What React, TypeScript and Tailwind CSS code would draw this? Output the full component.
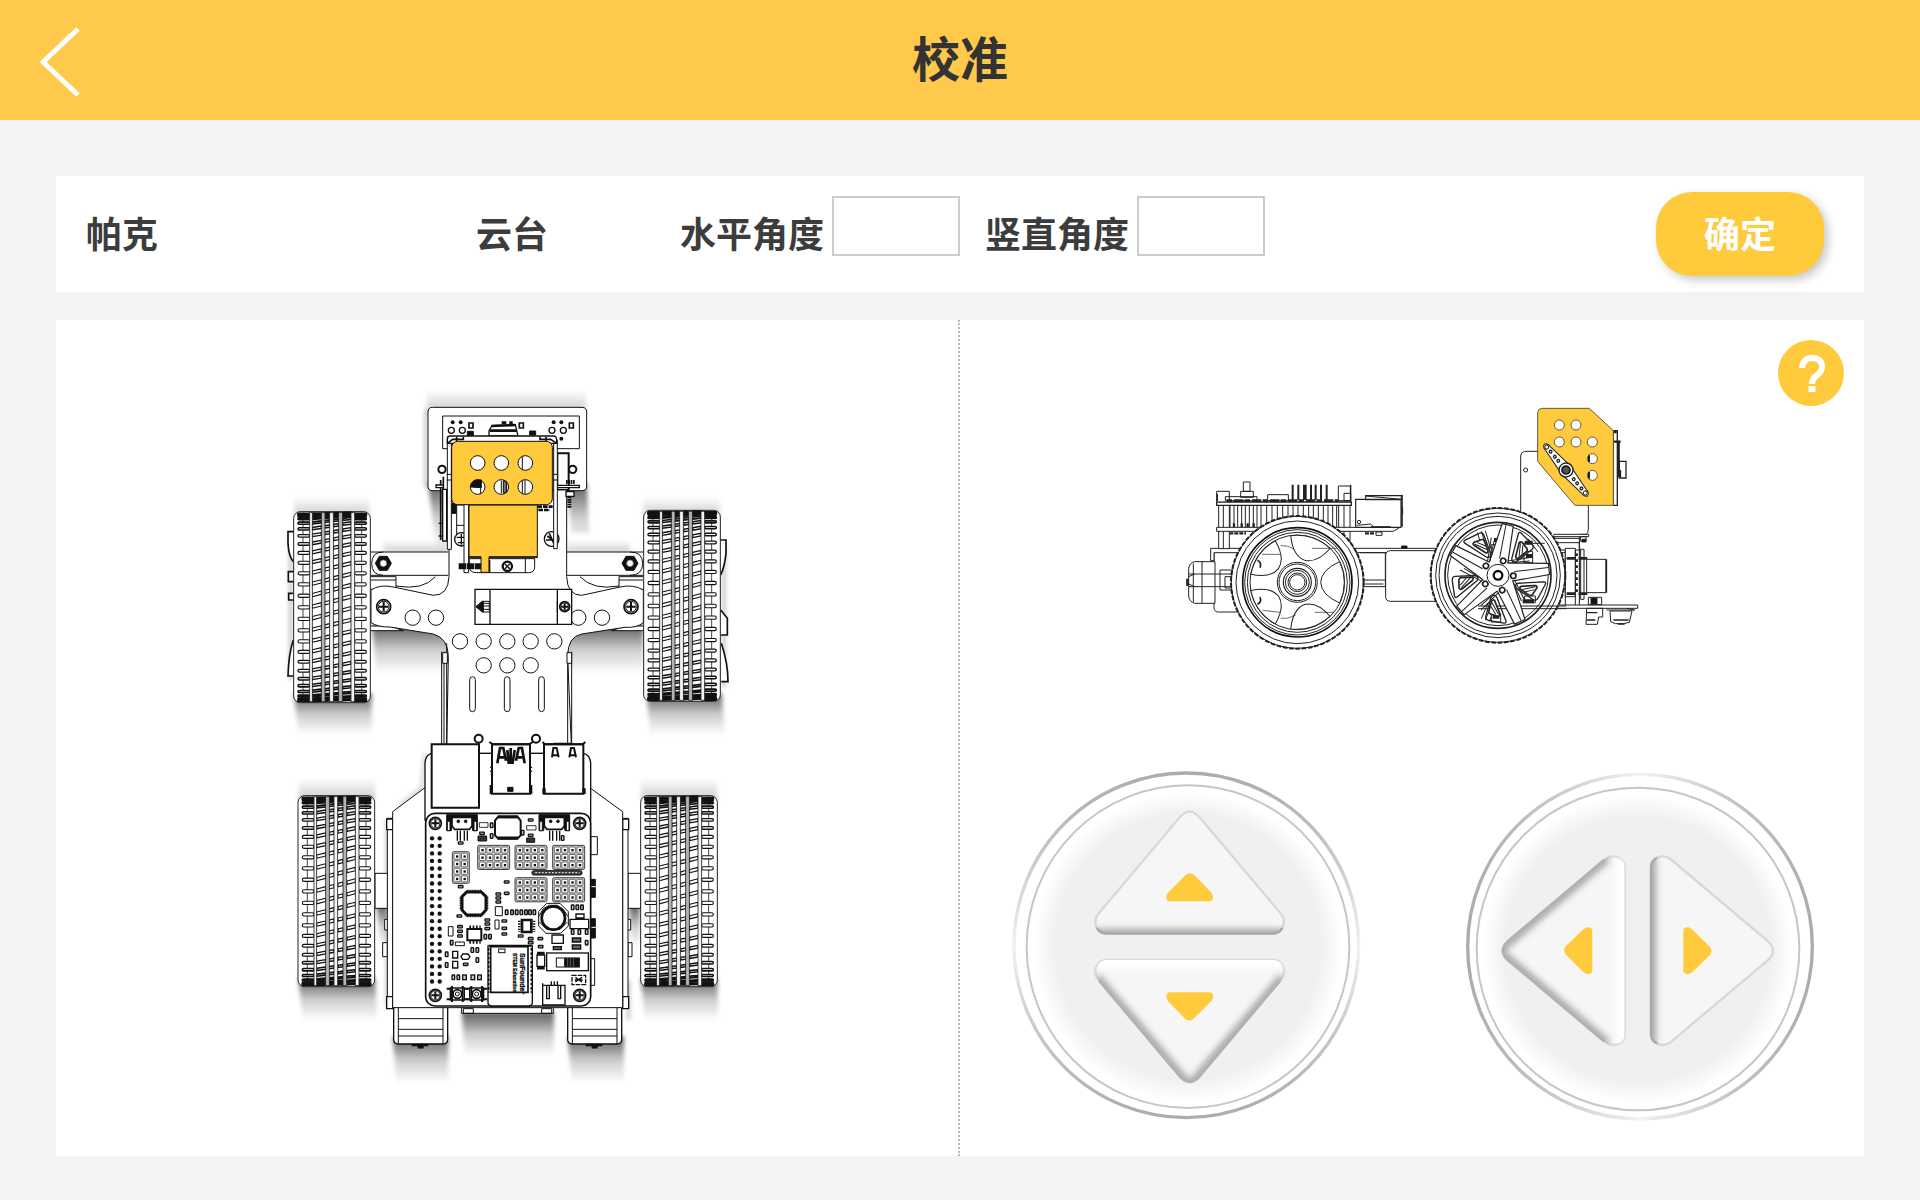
import React from "react";

type Point = [number, number];

const TREAD_BANDS: Point[] = [
  [56, 83],
  [93, 108],
  [120, 135],
  [147, 172],
];
const TREAD_GROOVES = [48, 83, 108, 135, 172];
const TREAD_ROWS = Array.from({ length: 25 }, (_, i) => (i - 12) * 0.124);

/** Tyre seen from above: 230 x 573 units, tread rows compressed towards both ends. */
function Tyre({ x, y }: { x: number; y: number }) {
  return (
    <g transform={`translate(${x} ${y})`}>
      <rect x="0" y="0" width="230" height="573" rx="20" fill="#fff" stroke="#222" strokeWidth="3" />
      <path d="M28 3V570M204 3V570" stroke="#222" strokeWidth="2.5" fill="none" />
      {TREAD_ROWS.map((a) => {
        const s = Math.cos(a);
        const cy = 287 + 281 * Math.sin(a);
        const h = 3 + 7 * s;
        const w = 3.2 + 3 * (1 - s);
        const rise = (px: number) => cy - ((px - 48) / 130) * 34 * s;
        const strip = ([x1, x2]: Point) =>
          `M${x1} ${rise(x1) - h / 2}L${x2} ${rise(x2) - h / 2}V${rise(x2) + h / 2}L${x1} ${rise(x1) + h / 2}Z`;
        return (
          <g key={a} fill="#fff" stroke="#111" strokeWidth={w} strokeLinejoin="round">
            <rect x="13" y={cy - h / 2} width="35" height={h} rx={h / 2} />
            {TREAD_BANDS.map((band) => (
              <path key={band[0]} d={strip(band)} />
            ))}
            <rect x="183" y={cy - h / 2} width="35" height={h} rx={h / 2} />
          </g>
        );
      })}
      {TREAD_GROOVES.map((gx, i) => (
        <rect
          key={gx}
          x={gx}
          y="3"
          width={i === 0 ? 8 : 11}
          height="567"
          fill={i === 1 || i === 3 ? "#b4b4b4" : "#f4f4f4"}
          stroke="#222"
          strokeWidth="2.5"
        />
      ))}
    </g>
  );
}

function Screw({ x, y, r = 20 }: { x: number; y: number; r?: number }) {
  return (
    <g transform={`translate(${x} ${y})`} fill="none" stroke="#111">
      <circle r={r - 2} fill="#fff" strokeWidth="5" />
      <circle r={r * 0.7} strokeWidth="3" />
      <path d={`M${-r * 0.6} 0H${r * 0.6}M0 ${-r * 0.6}V${r * 0.6}`} strokeWidth="6" />
    </g>
  );
}

function HexNut({ x, y }: { x: number; y: number }) {
  return (
    <g transform={`translate(${x} ${y})`}>
      <path d="M-24 0L-12-21H12L24 0L12 21H-12Z" fill="#111" />
      <circle r="10" fill="#fff" stroke="#666" strokeWidth="2" />
    </g>
  );
}

/** Block of header pins with a dot in each cell. */
function PinBlock({ x, y, cols, rows }: { x: number; y: number; cols: number; rows: number }) {
  return (
    <g transform={`translate(${x} ${y})`}>
      <rect x="-3" y="-3" width={cols * 22.5 + 6} height={rows * 22.5 + 5} rx="5" fill="#ccc" stroke="#222" strokeWidth="2.5" />
      {Array.from({ length: cols * rows }, (_, i) => {
        const cx = (i % cols) * 22.5;
        const cy = Math.floor(i / cols) * 22.5;
        return (
          <g key={i}>
            <rect x={cx + 2} y={cy + 2} width="18" height="18" rx="2" fill="#fff" stroke="#333" strokeWidth="2" />
            <rect x={cx + 8} y={cy + 8} width="7" height="7" fill="#111" stroke="none" />
          </g>
        );
      })}
    </g>
  );
}

const SMALL_PARTS: Point[] = [
  [572, 369], [572, 500], [710, 486], [710, 520], [685, 522], [685, 534], [685, 546], [568, 588],
  [570, 620], [570, 634], [570, 648], [652, 600], [652, 612], [652, 626], [703, 603], [703, 625],
  [703, 642], [752, 648], [782, 656], [782, 668], [782, 300], [782, 346], [636, 340], [811, 656],
  [812, 680], [587, 733],
];

const TALL_PARTS: Point[] = [
  [710, 577], [726, 577], [740, 577], [754, 577], [768, 577], [780, 577], [793, 577], [908, 562],
  [922, 562], [936, 562], [646, 650], [660, 650], [607, 690], [622, 690], [622, 720], [530, 703],
  [530, 735], [550, 772], [565, 772], [545, 668], [878, 354], [908, 636], [928, 636], [950, 636],
  [950, 668], [665, 316], [665, 348], [758, 338],
];

function ControlBoard() {
  return (
    <g stroke="#111" fill="#fff" strokeWidth="3">
      <path d="M962 350h20v54h-20zM962 716h12v80h-12z" />
      <path d="M962 478h14v54h-14zM962 596h14v58h-14z" fill="#111" />
      <path d="M962 500h16M962 622h16" stroke="#fff" />
      <rect x="467" y="280" width="495" height="578" rx="28" strokeWidth="5" />
      {[0, 1].map((c) =>
        Array.from({ length: 20 }, (_, r) => (
          <circle key={`${c}-${r}`} cx={486 + c * 23} cy={355 + r * 22.6} r="6.5" fill="#111" stroke="none" />
        )),
      )}
      <Screw x={496} y={310} />
      <Screw x={929} y={310} />
      <Screw x={496} y={826} />
      <Screw x={929} y={826} />
      {[576, 853].map((x) => (
        <g key={x} transform={`translate(${x} 284)`}>
          <path d="M-46 0H46V48H32L28 20H-28L-32 48H-46Z" fill="#111" />
          <path d="M-30 8H30V34L22 44H-22L-30 34Z" strokeWidth="5" />
          <path d="M-14 48V78M-5 48V78M7 48V78M16 48V78" strokeWidth="4" />
          <circle cx="-11" cy="20" r="4" fill="#111" />
          <circle cx="11" cy="20" r="4" fill="#111" />
          <path d="M-44 20h8v28h-8zM36 20h8v28h-8z" />
        </g>
      ))}
      <path d="M683 292H744L752 302V346L742 356H685L675 346V302Z" strokeWidth="6" />
      <path d="M683 290H744M683 354H744" strokeWidth="9" />
      <path d="M628 308h26v14h-26zM770 317h28v13h-28z" strokeWidth="2.5" />
      <path d="M624 348h26v15h-26zM770 354h24v13h-24z" fill="#333" />
      <PinBlock x={550} y={398} cols={2} rows={4} />
      <PinBlock x={626} y={379} cols={4} rows={3} />
      <PinBlock x={738} y={379} cols={4} rows={3} />
      <PinBlock x={851} y={379} cols={4} rows={3} />
      <PinBlock x={738} y={476} cols={4} rows={3} />
      <PinBlock x={851} y={476} cols={4} rows={3} />
      <rect x="786" y="452" width="150" height="13" rx="5" fill="#444" />
      <path d="M796 458H928" stroke="#fff" strokeDasharray="5 5" />
      <path d="M590 516H634L648 530V570L634 585H590L576 570V530Z" strokeWidth="9" />
      <path d="M590 513H634M590 588H634M573 530V570M651 530V570" strokeWidth="8" strokeDasharray="3 2" />
      {SMALL_PARTS.map(([x, y]) => (
        <rect key={`${x}-${y}`} x={x - 7} y={y - 3.5} width="14" height="7" rx="2" fill="#bbb" strokeWidth="4" />
      ))}
      {TALL_PARTS.map(([x, y]) => (
        <rect key={`${x}-${y}`} x={x - 4} y={y - 7} width="8" height="14" rx="2" fill="#bbb" strokeWidth="4" />
      ))}
      <path d="M535 620h14v28h-14zM676 560h21v27h-21zM675 600h12v27h-12zM556 666h27v11h-27z" strokeWidth="3" />
      <path d="M592 627h42v34h-42z" strokeWidth="6" />
      <path d="M598 621H632M598 667H632" strokeWidth="9" strokeDasharray="5 5" />
      <path d="M756 600h28v36h-28z" strokeWidth="8" />
      <path d="M748 602V636M792 602V636" strokeWidth="8" strokeDasharray="4 4" />
      <path d="M830 550H870L895 575V618L872 640H828L806 618V575Z" />
      <path d="M806 590L820 566L838 556H862L880 568L894 590M808 606L830 628H870L892 606" fill="none" />
      <circle cx="850" cy="594" r="35" strokeWidth="8" />
      <path d="M846 645h34v25h-34zM900 598h56v28h-56zM918 582h24v12h-24z" strokeWidth="4" />
      <path d="M850 680h24v9h-24zM907 654h25v12h-25zM907 675h25v12h-25z" fill="#666" strokeWidth="4" />
      <path d="M801 705h23v34h-23z" strokeWidth="4" />
      <path d="M801 700h23M801 744h23" strokeWidth="9" />
      <rect x="830" y="699" width="125" height="53" strokeWidth="4" />
      <rect x="859" y="714" width="69" height="27" />
      <path d="M884 715h43v25h-43z" fill="#111" />
      <path d="M893 715V740M901 715V740M910 715V740" stroke="#aaa" strokeWidth="1.5" />
      <path d="M906 766h41v28h-41z" strokeDasharray="14 3" strokeWidth="4" />
      <path d="M916 772l20 14M936 772l-20 14M914 780h24" strokeWidth="4" />
      <path d="M548 694h15v20h-15zM578 702h16l6 8-6 8h-16l-5-8zM548 724h15v20h-15z" strokeWidth="4" />
      {[583, 608, 628].map((x) => (
        <rect key={x} x={x - 5} y="765" width="11" height="14" fill="#ccc" strokeWidth="4" />
      ))}
      {[562, 620].map((x) => (
        <g key={x} transform={`translate(${x} 822)`}>
          <path d="M-21-18h42v36h-42z" strokeWidth="4" />
          <path d="M-32-16h12M20-16h12M-32 16h12M20 16h12M-16-24v48M16-24v48" strokeWidth="6" />
          <circle r="13" strokeWidth="5" />
          <circle r="6" />
        </g>
      ))}
      <path d="M654 676V850Q656 858 666 858H776Q787 856 787 848V676" strokeWidth="4" />
      <path d="M656 684V818M784 684V818" strokeDasharray="8 5" strokeWidth="5" />
      <path d="M662 680h112v137h-112z" strokeWidth="5" />
      <path d="M655 677H786" strokeWidth="6" />
      <rect x="686" y="687" width="19" height="11" />
      <g fill="#111" stroke="#111" strokeWidth="1" fontFamily='"Liberation Sans", sans-serif' fontWeight="700">
        <text transform="translate(749 699) rotate(90)" fontSize="21">
          SunFounder
        </text>
        <text transform="translate(728 699) rotate(90)" fontSize="15">
          STEM Education
        </text>
      </g>
      <path d="M818 790V855H885V796H818M830 798v38h8v-38M864 798v38h8v-38M844 784v14M853 784v14M862 784v14" strokeWidth="4" />
    </g>
  );
}

function CarTopView() {
  return (
    <svg viewBox="0 0 1440 2148" className="h-auto w-[480px]" role="img" aria-label="帕克俯视图">
      <defs>
        <linearGradient id="castDown" x1="0" y1="0" x2="0" y2="1">
          <stop offset="0" stopColor="#000" stopOpacity="0.65" />
          <stop offset="0.5" stopColor="#000" stopOpacity="0.2" />
          <stop offset="1" stopColor="#000" stopOpacity="0" />
        </linearGradient>
        <linearGradient id="castUp" x1="0" y1="1" x2="0" y2="0">
          <stop offset="0" stopColor="#000" stopOpacity="0.2" />
          <stop offset="1" stopColor="#000" stopOpacity="0" />
        </linearGradient>
        <filter id="soft" x="-20%" y="-20%" width="140%" height="140%">
          <feGaussianBlur stdDeviation="6" />
        </filter>
      </defs>

      <g filter="url(#soft)">
        <g fill="url(#castDown)">
          <path d="M72 940H305V1065H85ZM1130 940H1355L1365 1065H1140Z" />
          <path d="M85 1795H315L322 1920H98ZM1112 1795H1342L1345 1920H1124Z" />
          <path d="M474 310H540V510H500ZM890 310H950L958 460H905Z" />
          <path d="M305 735H540V880H320ZM890 735H1120V880H890Z" />
          <path d="M368 1970H535V2110H380ZM893 1970H1062V2110H905Z" />
          <path d="M575 1895H852V2030H585Z" />
          <path d="M320 1575H350V1700H330ZM1077 1575H1110V1700H1082Z" />
        </g>
        <g fill="url(#castUp)">
          <path d="M72 350H298V410H72ZM1120 350H1350V410H1120Z" />
          <path d="M85 1195H315V1260H85ZM1112 1195H1342V1260H1112Z" />
          <path d="M470 30H948V95H470Z" />
          <path d="M340 480H535V520H340ZM890 480H1080V520H890Z" />
        </g>
        <path d="M468 90V320M62 460V900M1362 500V920M352 1320V1880M1076 1800V1920" stroke="#000" strokeOpacity="0.3" strokeWidth="8" />
        <path d="M466 1120L456 1222L385 1280" stroke="#000" strokeOpacity="0.18" strokeWidth="10" fill="none" />
      </g>

      <g fill="#fff" stroke="#111" strokeWidth="3">
        <path d="M72 455H54V490Q56 530 70 545M72 575H55V605H72M70 640H56V660H72M70 780Q56 820 54 888H74" strokeWidth="5" />
        <path d="M1350 480H1368V520Q1364 560 1352 585M1352 690L1372 715V765H1352M1354 790Q1374 850 1374 905H1354" strokeWidth="5" />

        <path d="M488 82H936Q950 82 950 96V318Q950 332 936 332H488Q474 332 474 318V96Q474 82 488 82Z" />
        <path d="M518 108h410v98h-410z" />
        {[548, 572, 851, 874].map((x) => (
          <circle key={x} cx={x} cy="127" r="6" fill="#111" stroke="none" />
        ))}
        <circle cx="874" cy="176" r="6" fill="#111" stroke="none" />
        {[544, 577, 846, 880].map((x) => (
          <circle key={x} cx={x} cy="151" r="9" strokeWidth="4" />
        ))}
        <path d="M597 129h12v15h-12zM748 129h12v15h-12zM898 129h12v15h-12z" strokeWidth="5" />
        <path d="M592 154h18v12h-18zM779 153h18v12h-18z" fill="#111" />
        <path d="M657 168V152L666 137L736 134L744 168Z" strokeWidth="4" />
        <path d="M664 138L735 135M660 152H740M695 128h14M718 128h10" strokeWidth="8" fill="none" />
        <path d="M862 220h34v110h-34z" strokeWidth="6" />
        <circle cx="516" cy="268" r="11" strokeWidth="6" />
        <circle cx="908" cy="268" r="11" strokeWidth="6" />

        <path d="M535 516H340Q305 516 305 550Q305 586 340 586H535" />
        <path d="M890 516H1080Q1118 516 1118 550Q1118 586 1080 586H890" />
        <path d="M303 516H340M1080 516H1120M303 586H340M1080 586H1120" />
        <path d="M303 590H378V628H303M378 618Q460 632 496 590M1120 590H1047V628H1120M1047 618Q970 632 930 590" />
        <path d="M303 600H378M1047 600H1120M303 738H360L400 752H303M1120 738H1065L1025 752H1120" />
        <path d="M537 330V590Q535 646 490 646L370 621Q330 612 303 630V728Q325 742 360 741L490 762Q535 775 535 830L530 1120H905L893 830Q893 770 935 762L1065 742Q1100 744 1120 728V630Q1090 612 1050 621L935 646Q892 646 890 590V330Z" />
        <path d="M515 815V1110M522 815V1110M530 790V1110M893 815V1110M905 815V1110" />
        <path d="M518 818h14v32h-14zM891 818h14v32h-14z" />
        <HexNut x={340} y={550} />
        <HexNut x={1080} y={550} />
        <Screw x={341} y={680} r={23} />
        <Screw x={1083} y={680} r={23} />
        {[428, 498, 925, 996].map((x) => (
          <circle key={x} cx={x} cy="713" r="23" />
        ))}
        {[570, 641, 712, 782, 853].map((x) => (
          <circle key={x} cx={x} cy="784" r="23" />
        ))}
        {[641, 712, 782].map((x) => (
          <circle key={x} cx={x} cy="856" r="23" />
        ))}
        {[608, 712, 815].map((x) => (
          <rect key={x} x={x - 9} y="890" width="17" height="105" rx="9" />
        ))}
        <path d="M615 628h290v105h-290zM660 628V733M862 628V733" strokeWidth="4" />
        <path d="M658 664H636L618 680L636 696H658Z" />
        <path d="M618 680L640 664V696Z" fill="#111" />
        <path d="M638 670H658M638 678H658M638 688H658M862 664V696" />
        <Screw x={884} y={680} r={17} />

        <path d="M520 290V480M512 300V480" strokeWidth="5" />
        <path d="M518 328h12v155h-12zM498 315h22v8h-22zM506 430h12M506 468h12" strokeWidth="4" />
        <path d="M545 370h14v30h-14z" fill="#111" />
        <path d="M560 375h28v100h-28zM560 436H588" />
        <circle cx="574" cy="478" r="20" strokeWidth="4" />
        <path d="M560 472H584M564 488H584M574 462V494" strokeWidth="4" />
        <path d="M582 372h14v206h-14z" />
        <circle cx="845" cy="477" r="22" strokeWidth="4" />
        <path d="M838 460L852 492M828 480H862M832 468L856 486" strokeWidth="5" />
        <path d="M802 380H848M805 390H840" strokeWidth="8" strokeDasharray="14 3" />
        <path d="M862 316h66v7h-66zM888 335h24v14h-24z" strokeWidth="4" />
        <path d="M898 350V384M888 306h26" strokeWidth="12" strokeDasharray="5 2" />
        <path d="M598 536H794V560Q794 578 776 578H620Q598 578 598 560ZM766 536V578" strokeWidth="3" />
        <circle cx="712" cy="559" r="14" strokeWidth="7" />
        <path d="M704 551l16 16M704 567l16-16" strokeWidth="4" />
        <path d="M566 559H633" strokeWidth="18" strokeDasharray="22 2" />
        <path d="M657 540V577" strokeWidth="8" />
        <path d="M532 170h12v338h-12z" />
        <path d="M851 180h11v326h-11z" />
        <path d="M540 168H850Q860 168 860 180V190H532V180Q532 168 540 168Z" strokeWidth="4" />
        <path d="M532 190L548 178H580V170M860 190L842 178H810V170M560 170V184M828 170V184" strokeWidth="5" fill="none" />
        <path d="M530 283h14M530 300h14M850 283h12M850 300h12" />
        <path d="M597 375h205v158h-205z" fill="#ffca3c" />
        <path d="M633 531H657V577H633Z" fill="#ffca3c" stroke="none" />
        <path d="M597 530H633V577H657V530H802" fill="none" />
        <rect x="545" y="184" width="302" height="190" rx="18" fill="#ffca3c" />
        {[623, 694, 766].map((x) => (
          <g key={x}>
            <circle cx={x} cy="249" r="22" />
            <circle cx={x} cy="321" r="22" />
          </g>
        ))}
        <path d="M757 229V269M757 301V341M765 300V342M632 324V341M694 302V340M702 300V340M710 308V334" />
        <path d="M602 321Q604 303 620 300H634V323Z" fill="#111" />
        <path d="M700 304H709V338H700Z" fill="#777" />
      </g>

      <Tyre x={71} y={395} />
      <Tyre x={1121} y={391} />

      <g transform="translate(0 1020)">
        <g fill="#fff" stroke="#111" strokeWidth="3">
          <path d="M315 460h38v105h-38zM1074 460h38v105h-38z" />
          <path d="M338 668h14v42h-14zM1074 668h12v42h-12zM344 598h10v32h-10zM1072 598h10v32h-10z" />
          <path d="M352 295h16v570h-16zM1058 295h16v570h-16z" />
          <path d="M350 297h18v32h-18zM1058 297h18v32h-18zM350 830h18v36h-18zM1058 830h18v36h-18z" strokeWidth="4" />
          <path d="M575 862h275v18h-275zM580 866h30v14h-30zM815 866h30v14h-30z" />
          {[371, 893].map((x) => (
            <g key={x}>
              <path d={`M${x} 862V958Q${x} 972 ${x + 14} 972H${x + 148}Q${x + 162} 972 ${x + 162} 958V862Z`} strokeWidth="4" />
              <path d={`M${x + 14} 862V972M${x + 148} 862V972M${x + 14} 896H${x + 148}M${x + 14} 928H${x + 148}M${x + 14} 948H${x + 148}`} />
              <path d={`M${x + 54} 975h50M${x + 72} 982h18`} strokeWidth="7" />
            </g>
          ))}
          <path d="M462 205L368 275V863H1058V275L962 205Z" />
          <path d="M465 300V128Q467 104 485 100H940Q960 104 962 128V300Z" strokeWidth="4" />
          <circle cx="626" cy="56" r="12" strokeWidth="6" />
          <circle cx="798" cy="56" r="12" strokeWidth="6" />
          <path d="M485 73h142v190h-142z" strokeWidth="6" />
          <path d="M666 73h114v148h-114zM822 73h118v148h-118z" strokeWidth="6" />
          <path d="M658 66L668 73H778L788 66M818 66L824 73H938L946 66M852 71H908" strokeWidth="6" fill="none" />
          <path d="M664 195V222M782 195V222M822 205V222M942 205V222" strokeWidth="10" />
          <path d="M663 140V165M784 140V165" strokeDasharray="4 8" strokeWidth="5" />
          <path d="M682 130L690 84H700L708 122M686 112H704M712 90L716 128H728L734 90M722 84V124M738 122L746 84H756L764 130M742 112H760" strokeWidth="8" fill="none" />
          <path d="M846 112L850 84H860L866 112M846 106H866M898 112L903 84H912L918 112M898 106H918" strokeWidth="6" fill="none" />
          <path d="M713 202h16v12h-16z" fill="#111" />
        </g>
        <ControlBoard />
      </g>

      <Tyre x={84} y={1247} />
      <Tyre x={1112} y={1247} />
    </svg>
  );
}

const FIVE = [0, 72, 144, 216, 288];

function CarSideView() {
  return (
    <svg viewBox="0 48 1500 732" className="h-auto w-[500px]" role="img" aria-label="帕克侧视图">
      <g fill="#fff" stroke="#222" strokeWidth="3">
        {/* rear motor and chassis */}
        <path d="M176 480Q162 480 162 494V652Q162 666 176 666H400V480Z" />
        <path d="M165 515H104Q88 518 86 536V618Q88 636 104 640H165ZM86 552H220M86 590H220M100 520V636M126 515V640M86 560L104 552M86 582L104 590M180 540h40v60h-40zM195 560h20v34h-20z" />
        <path d="M82 566V588" strokeWidth="7" />
        <path d="M152 475H1260V488H162V512H152ZM600 488H676V590H600M600 582H670M600 570H676" />
        <path d="M725 468h16v7h-16z" fill="#111" />
        <path d="M692 482H980V634H692Q677 634 677 620V497Q677 482 692 482Z" />

        {/* control board stack */}
        <path d="M176 346h32v130h-32zM536 346h34v130h-34zM190 346V476M552 346V476" />
        <path d="M210 412V346M222 412V346M233 412V346M245 412V346M256 412V346M268 412V346M280 412V346M291 412V346M303 412V346M320 412V346M336 412V346M352 412V346M368 412V346M384 412V346M399 412V346M414 412V346M430 412V346M446 412V346M460 412V346M475 412V346M490 412V346M504 412V346M518 412V346M530 412V346" />
        <path d="M222 400V412M245 400V412M263 400V412M281 400V412" strokeWidth="7" />
        <path d="M170 412H720L700 424H170Z" strokeWidth="3" />
        <path d="M170 336h404v10h-404z" strokeWidth="4" />
        <path d="M170 334V304H208V334M196 320h95v12h-95zM242 304h38v18h-38zM250 276h20v28h-20zM323 314h62v18h-62zM535 288h36v44h-36zM552 310h20v22h-20z" strokeWidth="3" />
        <path d="M172 312V334M572 284V334" strokeWidth="4" />
        <path d="M200 332H536" strokeWidth="8" strokeDasharray="16 6 28 4" />
        <path d="M398 284V330M415 284V330M432 284V330M437 284V330M453 284V330M467 284V330M483 284V330M500 284V330" strokeWidth="6" />
        <path d="M587 328h136v84h-136zM617 317h107v12h-107z" strokeWidth="3.5" />
        <path d="M617 318L724 328M590 406L632 402L640 410M632 410h60" />
        <path d="M726 314V410" strokeWidth="5" />
        <path d="M728 352V374" />
        <circle cx="597" cy="396" r="5" />
        <path d="M208 430H258M615 430H645" strokeWidth="7" strokeDasharray="12 3" />
        <path d="M648 426h18v10h-18z" />

        {/* pan-tilt support, ranging sensor and front bracket */}
        <path d="M1133 184H1094Q1082 186 1082 198V480H1258V433H1278Q1285 430 1285 418V320H1250Z" />
        <circle cx="1097" cy="240" r="6" strokeWidth="3" />
        <path d="M1180 433H1286V440H1180M1180 445H1258V475M1262 440h16v14h-16zM1180 458H1258V650H1216V478" />
        <path d="M1266 448h12v8h-12z" fill="#111" />
        <path d="M1216 475h30v145h-30zM1246 480h12v170h-12zM1262 478h10v150h-10z" />
        <path d="M1250 490V610" strokeWidth="7" strokeDasharray="8 10" />
        <path d="M1220 505H1282M1220 611H1282" strokeWidth="8" strokeDasharray="26 10" />
        <path d="M1280 508h58v100h-58z" strokeWidth="3" />
        <path d="M1339 508V608" strokeWidth="5" />
        <path d="M950 645H1433V655H950ZM1285 622h40v22h-40zM1280 655h48v26h-12l-4 22h-34zM1350 663h66l-8 34-18 4h-24l-14-6zM1400 655L1424 660H1340" />
        <path d="M1293 624h18v18h-18z" fill="#111" />
        <path d="M1280 668h32M1280 690h26M1360 690h46M1374 702h20" strokeWidth="4" />

        {/* camera head */}
        <path d="M1360 122h12v224h-12zM1372 158V262M1378 214h20v50h-20z" strokeWidth="4" />
        <path d="M1376 154V262M1380 240V262" strokeWidth="7" />
        <path d="M1360 126h10M1360 155h22" strokeWidth="7" />
        <path d="M1146 55H1288L1360 122V346H1245L1133 214V68Q1134 56 1146 55Z" fill="#ffca3c" stroke="#665a3a" strokeWidth="3" />
        {(
          [[1198, 105], [1248, 105], [1198, 156], [1248, 156], [1297, 156], [1297, 206], [1297, 256]] as Point[]
        ).map(([x, y]) => (
          <circle key={`${x}-${y}`} cx={x} cy={y} r="15" stroke="#665a3a" />
        ))}
        <path d="M1287 196V216M1287 246V266" strokeWidth="6" />
        <g transform="translate(1218 240) rotate(50)">
          <path d="M-92-9H-84L0-18L84-9H92Q101-5 101 0Q101 5 92 9H84L0 18L-84 9H-92Q-101 5-101 0Q-101-5-92-9Z" />
          <circle cx="-90" r="6" strokeWidth="3" />
          <circle cx="90" r="6" strokeWidth="3" />
          {[-72, -52, -36, 36, 52, 72].map((x) => (
            <circle key={x} cx={x} r="4" strokeWidth="4" />
          ))}
          <circle r="21" strokeWidth="4" />
          <circle r="12" fill="#555" stroke="#111" strokeWidth="5" />
        </g>

        {/* rear wheel */}
        <g transform="translate(412 577)">
          <circle r="198" />
          <circle r="199" fill="none" strokeWidth="6" strokeDasharray="14 5" />
          <circle r="184" />
          <circle r="164" strokeWidth="5" stroke="#111" />
          <circle r="158" strokeWidth="3" />
          <circle r="150" />
          <circle r="142" />
          {FIVE.map((a) => (
            <path key={a} transform={`rotate(${a})`} d="M127-62Q72-38 70 0Q72 38 127 62Q141 32 141 0Q141-32 127-62Z" />
          ))}
          <g fill="none" strokeWidth="2">
            <path d="M44-102H118M-106-84L-52-84M-50-110Q-30-112-10-100M-104 84L-52 90M52 90H110M-50 108Q-30 112-5 98" />
            <path d="M-120-66Q-106-60-112-44M-120 66Q-106 60-112 44" strokeWidth="5" />
          </g>
          <circle r="60" />
          <circle r="55" />
          <circle r="42" strokeWidth="3.5" />
          <circle r="36" />
          <circle r="28" strokeWidth="3" />
          <circle r="23" />
        </g>

        {/* front wheel */}
        <g transform="translate(1014 556)">
          <circle r="201" />
          <circle r="202" fill="none" strokeWidth="6" strokeDasharray="14 5" />
          <circle r="187" />
          <circle r="177" />
          <circle r="159" strokeWidth="5" />
          <circle r="151" />
          <path d="M-62-128L-44-72M-50-132L-32-76M-38-134L-22-80M-50 130L-30 84M-38 134L-20 90M-26 138L-8 96" strokeWidth="3" />
          <path d="M-20-92H10V-70H-20ZM78-72H104V-38H78ZM80 62H112V82H80ZM-20 116H8V140H-20Z" />
          <path d="M-12-106H10M84-58H104M80-98H104M74 78H108M-16 124H4" strokeWidth="12" />
          <path d="M-60 92H205M-60 100H205M60-96H140M90-110L120-70M90-40V-4M104-40V-4" />
          {FIVE.map((a) => (
            <g key={a} transform={`rotate(${a - 78})`}>
              <path d="M154-20L30-34Q22 0 30 22L154 14Z" strokeWidth="3.5" />
              <path d="M152-8L50-6" />
              <path d="M136 34L58 30Q44 32 52 46L98 84Q106 90 114 78L138 42Q142 36 136 34Z" fill="none" strokeWidth="4" />
              <path d="M108 42L66 40Q58 42 64 50L86 68Q94 74 100 64L112 50Q114 43 108 42Z" strokeWidth="5" />
              <path d="M68 50L108 46M74 58L104 54" strokeWidth="3" />
              <path d="M42 22L62 84M48 20L74 88" />
            </g>
          ))}
          <circle r="46" stroke="none" />
          {FIVE.map((a) => (
            <circle key={a} transform={`rotate(${a - 70})`} cx="46" cy="0" r="8" strokeWidth="5" />
          ))}
          <circle r="33" strokeWidth="3" />
          <circle r="13" strokeWidth="7" stroke="#111" />
        </g>
      </g>
    </svg>
  );
}

const KEY_SHAPE =
  "M255 20Q284-12 313 20L556 308Q568 322 567 338Q562 368 535 370H32Q4 368 1 338Q0 322 12 308Z";

const KEY_PLACEMENT = {
  up: { label: "向上", size: "h-[125px] w-[190px]", box: "0 -1 570 375", turn: "", shaded: "base" },
  down: { label: "向下", size: "h-[125px] w-[190px]", box: "0 -3 570 375", turn: "translate(568 370) rotate(180)", shaded: "sides" },
  left: { label: "向左", size: "h-[190px] w-[125px]", box: "-1 0 375 570", turn: "translate(0 568) rotate(-90)", shaded: "sides" },
  right: { label: "向右", size: "h-[190px] w-[125px]", box: "-3 0 375 570", turn: "translate(370 0) rotate(90)", shaded: "base" },
} as const;

function ArrowKey({ direction }: { direction: keyof typeof KEY_PLACEMENT }) {
  const { label, size, box, turn, shaded } = KEY_PLACEMENT[direction];
  const clip = `key-${direction}`;
  const blur = `blur-${direction}`;
  return (
    <button type="button" aria-label={label} className={`block cursor-pointer ${size}`}>
      <svg viewBox={box} className="h-full w-full overflow-visible" aria-hidden="true">
        <defs>
          <clipPath id={clip}>
            <path d={KEY_SHAPE} />
          </clipPath>
          <filter id={blur} filterUnits="userSpaceOnUse" x="-60" y="-60" width="690" height="500">
            <feGaussianBlur stdDeviation="9" />
          </filter>
        </defs>
        <g transform={turn}>
          <path d={KEY_SHAPE} fill="#f6f6f6" stroke="#dad8d5" strokeWidth="7" />
          <g clipPath={`url(#${clip})`}>
            {shaded === "base" ? (
              <path d="M0 374H568" stroke="#a8a8a8" strokeWidth="38" filter={`url(#${blur})`} />
            ) : (
              <>
                <path d="M0 370H568" stroke="#fff" strokeWidth="50" filter={`url(#${blur})`} />
                <path d="M6 318L284-8L562 318" fill="none" stroke="#a8a8a8" strokeWidth="26" filter={`url(#${blur})`} />
              </>
            )}
          </g>
          {shaded === "base" ? (
            <path d="M6 352Q14 369 32 370H535Q554 369 562 352" fill="none" stroke="#aaa9a7" strokeWidth="7" />
          ) : (
            <path d="M12 308L255 20Q284-12 313 20L556 308" fill="none" stroke="#b3b0ad" strokeWidth="7" />
          )}
          <path
            d="M273 193Q285 184 297 193L350 248Q358 262 350 271Q348 273 342 273H226Q220 273 217 271Q210 262 218 248Z"
            fill="#ffca3c"
          />
        </g>
      </svg>
    </button>
  );
}

function Dial({ axis, children }: { axis: "vertical" | "horizontal"; children: React.ReactNode }) {
  const upright = axis === "vertical";
  const rim = `rim-${axis}`;
  const face = `face-${axis}`;
  return (
    <div role="group" aria-label={upright ? "竖直方向" : "水平方向"} className="grid h-[390px] w-[380px]">
      <svg viewBox="0 0 1140 1170" className="col-start-1 row-start-1 h-full w-full" aria-hidden="true">
        <defs>
          <linearGradient id={rim} x1="0" y1="0" x2={upright ? "0" : "1"} y2={upright ? "1" : "0"}>
            <stop offset="0" stopColor="#acacac" />
            <stop offset="0.25" stopColor="#c8c8c8" />
            <stop offset="0.5" stopColor="#f2f2f2" />
            <stop offset="0.75" stopColor="#c8c8c8" />
            <stop offset="1" stopColor="#acacac" />
          </linearGradient>
          <radialGradient id={face}>
            <stop offset="0.82" stopColor="#f0f0f0" />
            <stop offset="0.96" stopColor="#fff" />
          </radialGradient>
        </defs>
        <circle cx={upright ? 559 : 570} cy={upright ? 586 : 590} r="517" fill="#fff" stroke={`url(#${rim})`} strokeWidth="10" />
        <circle cx="564" cy={upright ? 590 : 597} r="484" fill={`url(#${face})`} stroke="#c6c6c6" strokeWidth="6" />
      </svg>
      <div
        className={
          upright
            ? "col-start-1 row-start-1 flex flex-col items-center justify-center gap-6 pt-1"
            : "col-start-1 row-start-1 flex items-center justify-center gap-6 pt-3 pr-1"
        }
      >
        {children}
      </div>
    </div>
  );
}

export default function App() {
  return (
    <div className="flex min-h-screen flex-col bg-[#f3f3f3] font-['Noto_Sans_CJK_SC',sans-serif] text-[#3c3c3c]">
      <header className="grid h-[120px] grid-cols-[1fr_auto_1fr] items-center bg-[#ffc94b] px-10">
        <button type="button" aria-label="返回" className="mt-1 h-[70px] w-10 cursor-pointer">
          <svg viewBox="0 0 40 70" className="h-full w-full" aria-hidden="true">
            <path d="M38 2L3 35L38 68" fill="none" stroke="#fff" strokeWidth="5" />
          </svg>
        </button>
        <h1 className="pb-2 text-5xl font-bold text-[#333]">校准</h1>
      </header>

      <main className="flex flex-1 flex-col gap-7 px-14 pt-14 pb-11">
        <form
          className="flex h-[116px] items-center bg-white pr-10 pl-[30px] text-4xl font-bold"
          onSubmit={(e) => e.preventDefault()}
        >
          <span className="w-[390px] pb-1">帕克</span>
          <span className="w-[204px] pb-1">云台</span>
          <label htmlFor="pan" className="pb-1">
            水平角度
          </label>
          <input id="pan" type="text" className="mr-[25px] mb-4 ml-2 h-[60px] w-32 border-2 border-[#ccc] bg-white px-2" />
          <label htmlFor="tilt" className="pb-1">
            竖直角度
          </label>
          <input id="tilt" type="text" className="mb-4 ml-2 h-[60px] w-32 border-2 border-[#ccc] bg-white px-2" />
          <button
            type="submit"
            className="ml-auto h-[84px] w-[168px] cursor-pointer rounded-[36px] bg-[#ffca3c] pb-1 text-white shadow-[4px_4px_10px_rgba(0,0,0,0.22)]"
          >
            确定
          </button>
        </form>

        <section className="grid flex-1 grid-cols-2 bg-white">
          <div className="flex items-center justify-center border-r-2 border-dotted border-[#bbb] pl-1.5">
            <CarTopView />
          </div>
          <div className="flex flex-col">
            <div className="flex justify-end pt-5 pr-5">
              <button
                type="button"
                aria-label="帮助"
                className="h-[66px] w-[66px] cursor-pointer rounded-full bg-[#ffca3c]"
              >
                <svg viewBox="0 0 66 66" className="h-full w-full" fill="none" stroke="#fff" aria-hidden="true">
                  <path d="M24 28Q25 18 34 18Q44 18 44 27Q44 32 38 36Q34 39 34 44" strokeWidth="6" />
                  <path d="M34 46V52" strokeWidth="7" />
                </svg>
              </button>
            </div>
            <div className="flex justify-center pr-1">
              <CarSideView />
            </div>
            <div className="mt-auto flex justify-between pr-[34px] pb-4 pl-10">
              <Dial axis="vertical">
                <ArrowKey direction="up" />
                <ArrowKey direction="down" />
              </Dial>
              <Dial axis="horizontal">
                <ArrowKey direction="left" />
                <ArrowKey direction="right" />
              </Dial>
            </div>
          </div>
        </section>
      </main>
    </div>
  );
}
